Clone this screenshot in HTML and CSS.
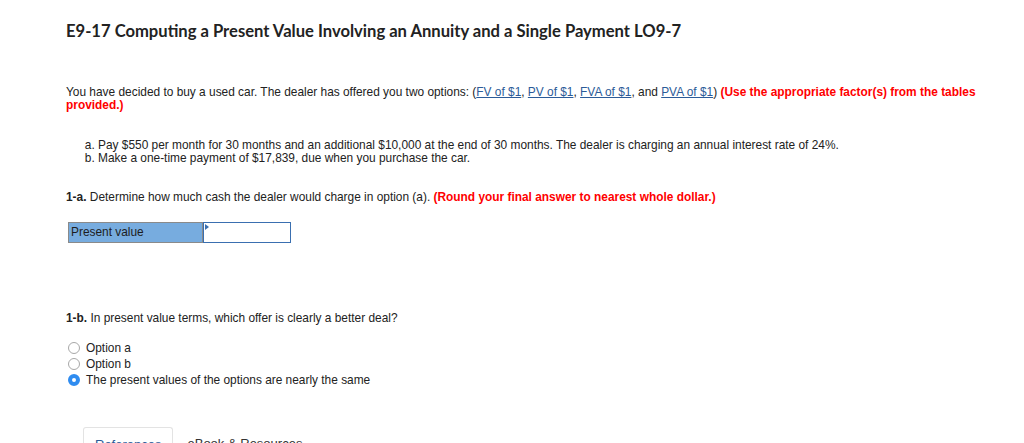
FILE: index.html
```html
<!DOCTYPE html>
<html lang="en">
<head>
    <meta charset="UTF-8">
    <title>E9-17 Computing a Present Value</title>
    <link rel="stylesheet" href="styles.css">
</head>
<body>
    <div class="question">
        <h1 class="title">E9-17 Computing a Present Value Involving an Annuity and a Single Payment LO9-7</h1>

        <p class="intro">
            You have decided to buy a used car. The dealer has offered you two options: (<a href="#">FV of $1</a>, <a href="#">PV of $1</a>, <a href="#">FVA of $1</a>, and <a href="#">PVA of $1</a>) <span class="note">(Use the appropriate factor(s) from the tables provided.)</span>
        </p>

        <ol class="options">
            <li>Pay $550 per month for 30 months and an additional $10,000 at the end of 30 months. The dealer is charging an annual interest rate of 24%.</li>
            <li>Make a one-time payment of $17,839, due when you purchase the car.</li>
        </ol>

        <p class="part"><b>1-a.</b> Determine how much cash the dealer would charge in option (a). <span class="note">(Round your final answer to nearest whole dollar.)</span></p>

        <div class="answer-row">
            <div class="answer-label">Present value</div>
            <div class="answer-input"><span class="flag"></span></div>
        </div>

        <p class="part part-b"><b>1-b.</b> In present value terms, which offer is clearly a better deal?</p>

        <ul class="choices">
            <li><span class="radio"></span>Option a</li>
            <li><span class="radio"></span>Option b</li>
            <li><span class="radio checked"></span>The present values of the options are nearly the same</li>
        </ul>

        <div class="tabs">
            <div class="tab active">References</div>
            <div class="tab">eBook &amp; Resources</div>
        </div>
    </div>
</body>
</html>
```

FILE: styles.css
```css
body {
    margin: 0;
    background: #ffffff;
    color: #222222;
    font-family: 'Liberation Sans', Arial, sans-serif;
    font-size: 11.9px;
    overflow: hidden;
}

.question {
    padding: 20px 0 0 66px;
    width: 922px;
}

.title {
    margin: 0;
    font-family: 'Lato', sans-serif;
    font-size: 16.6px;
    font-weight: 700;
    color: #222222;
    line-height: 22px;
}

.intro {
    margin: 44px 0 0;
    line-height: 13px;
}

.intro a {
    color: #2b5b98;
    text-decoration: underline;
}

.note {
    color: #ff0000;
    font-weight: bold;
}

.options {
    margin: 27px 0 0;
    padding-left: 32px;
    list-style: lower-alpha;
    line-height: 13px;
}

.part {
    margin: 26px 0 0;
    line-height: 13px;
}

.answer-row {
    display: flex;
    margin: 18px 0 0 2px;
    height: 21px;
}

.answer-label {
    width: 129px;
    background: #77acdf;
    border: 1px solid #8a8a8a;
    padding: 0 2px;
    line-height: 19px;
    color: #1d1d1d;
}

.answer-input {
    position: relative;
    width: 86px;
    border: 1px solid #3a6fb0;
    background: #ffffff;
}

.flag {
    position: absolute;
    left: 1px;
    top: 1px;
    border-left: 4px solid #3a6fb0;
    border-top: 3px solid transparent;
    border-bottom: 3px solid transparent;
}

.part-b {
    margin-top: 69px;
}

.choices {
    list-style: none;
    margin: 15px 0 0 2px;
    padding: 0;
}

.choices li {
    display: flex;
    align-items: center;
    height: 16px;
}

.radio {
    box-sizing: border-box;
    width: 12px;
    height: 12px;
    margin-right: 6px;
    border: 1px solid #a8a8a8;
    border-radius: 50%;
    background: #ffffff;
}

.radio.checked {
    border: 4px solid #2f8cf0;
    background: #ffffff;
}

.tabs {
    display: flex;
    margin: 39px 0 0 17px;
}

.tab {
    padding: 9px 14px 4px 14px;
    font-size: 13px;
    color: #333333;
}

.tab.active {
    border: 1px solid #e3e3e3;
    border-bottom: none;
    border-radius: 3px 3px 0 0;
    color: #2b5b98;
    padding-left: 11px;
    padding-right: 11px;
}
```
